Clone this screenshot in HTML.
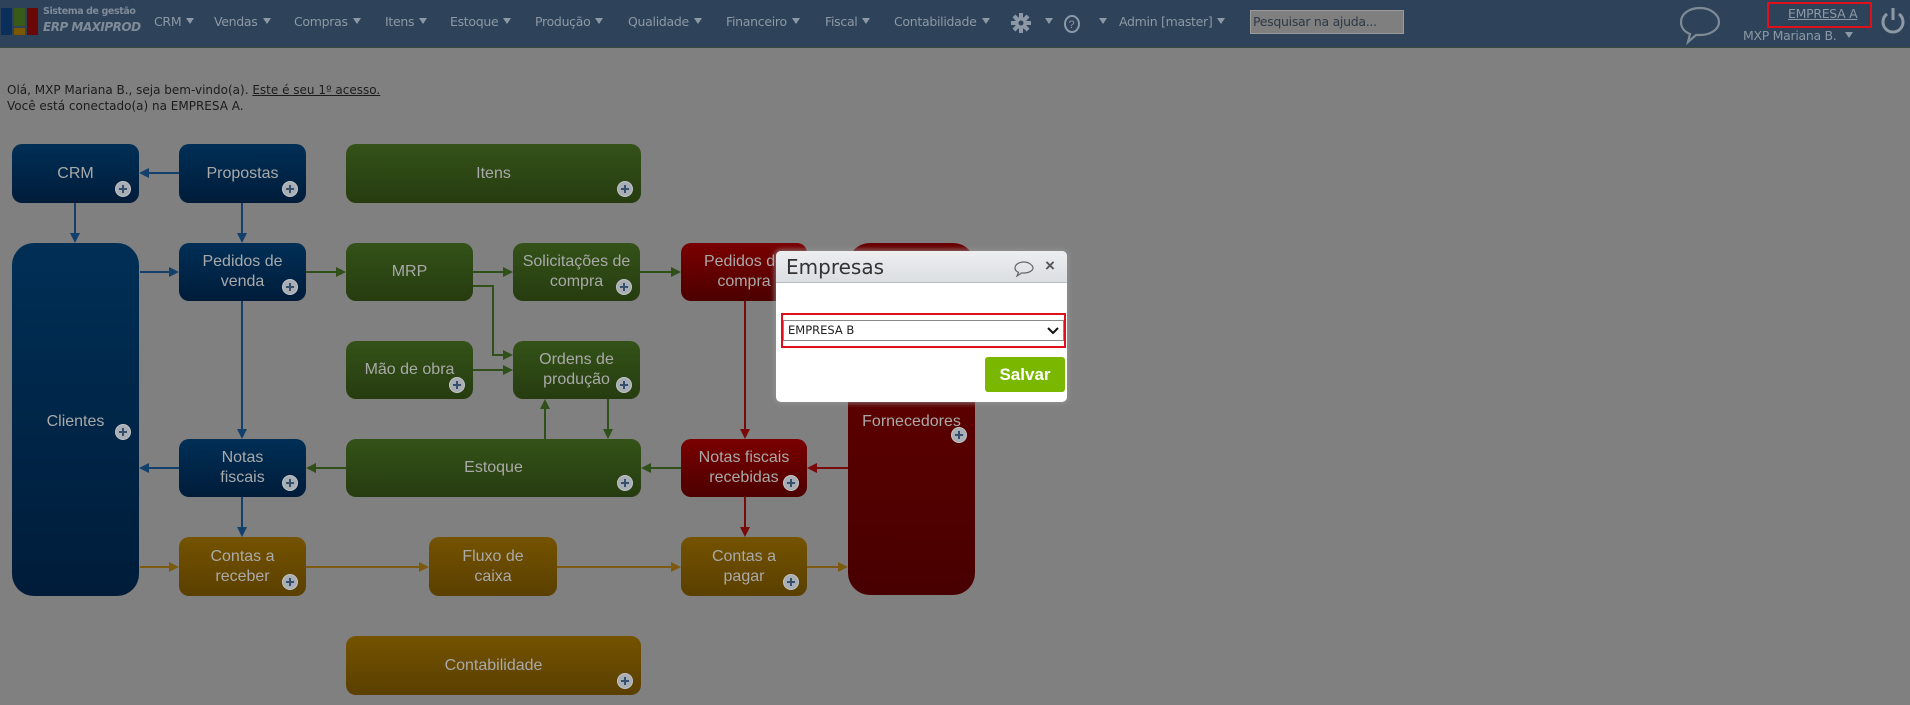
<!DOCTYPE html>
<html><head><meta charset="utf-8"><style>
*{margin:0;padding:0;box-sizing:border-box}
body{width:1910px;height:705px;background:#808080;position:relative;overflow:hidden;font-family:"Liberation Sans",Arial,sans-serif}
#hdr{position:absolute;left:0;top:0;width:1910px;height:48px;background:#2e4359;border-bottom:1px solid #3a4a3a}
.m{position:absolute;top:14px;font-family:"DejaVu Sans",sans-serif;font-size:12.5px;color:#8c98a5;white-space:nowrap;letter-spacing:-0.3px}
.tri{display:inline-block;width:0;height:0;border-left:4px solid transparent;border-right:4px solid transparent;border-top:6px solid #8c98a5;margin-left:5px;vertical-align:2px}
.b{position:absolute;border-radius:10px;color:#a9a9a9;font-size:16px;text-align:center;display:flex;align-items:center;justify-content:center;line-height:20px}
.bl{background:linear-gradient(#002f56,#001c3a)}
.gr{background:linear-gradient(#345218,#263c10)}
.rd{background:linear-gradient(#7a0000,#4c0000)}
.go{background:linear-gradient(#745300,#5a3f00)}
.p{position:absolute;right:8px;bottom:6px;width:16px;height:16px;border-radius:50%;background:#a9aeb4;border:1px solid #c0c4c8}
.p:before{content:"";position:absolute;left:3px;top:6px;width:8px;height:2px;background:#34506e}
.p:after{content:"";position:absolute;left:6px;top:3px;width:2px;height:8px;background:#34506e}
.t{position:absolute;font-family:"DejaVu Sans",sans-serif;font-size:12px;color:#1c1c1c}
</style></head><body>
<div id="hdr">
 <div style="position:absolute;left:1px;top:8px;width:11px;height:27px;background:#0a2f5a"></div>
 <div style="position:absolute;left:14px;top:8px;width:11px;height:18px;background:#3a5a1a"></div>
 <div style="position:absolute;left:14px;top:28px;width:11px;height:7px;background:#7a5800"></div>
 <div style="position:absolute;left:27px;top:8px;width:11px;height:27px;background:#6a0808"></div>
 <div style="position:absolute;left:43px;top:6px;font-family:'DejaVu Sans',sans-serif;font-size:9.5px;font-weight:bold;color:#7f8b98;letter-spacing:-0.4px">Sistema de gestão</div>
 <div style="position:absolute;left:43px;top:20px;font-family:'DejaVu Sans',sans-serif;font-size:12px;font-weight:bold;font-style:italic;color:#7f8b98;letter-spacing:-0.5px">ERP MAXIPROD</div>
 <div class="m" style="left:154px">CRM<span class="tri"></span></div>
 <div class="m" style="left:214px">Vendas<span class="tri"></span></div>
 <div class="m" style="left:294px">Compras<span class="tri"></span></div>
 <div class="m" style="left:385px">Itens<span class="tri"></span></div>
 <div class="m" style="left:450px">Estoque<span class="tri"></span></div>
 <div class="m" style="left:535px">Produção<span class="tri"></span></div>
 <div class="m" style="left:628px">Qualidade<span class="tri"></span></div>
 <div class="m" style="left:726px">Financeiro<span class="tri"></span></div>
 <div class="m" style="left:825px">Fiscal<span class="tri"></span></div>
 <div class="m" style="left:894px">Contabilidade<span class="tri"></span></div>
 <svg style="position:absolute;left:1010px;top:12px" width="22" height="22" viewBox="0 0 22 22"><g fill="#8c98a5"><circle cx="11" cy="11" r="6"/><rect x="9" y="1" width="4" height="20"/><rect x="1" y="9" width="20" height="4"/><rect x="9" y="1" width="4" height="20" transform="rotate(45 11 11)"/><rect x="9" y="1" width="4" height="20" transform="rotate(-45 11 11)"/></g><circle cx="11" cy="11" r="2.5" fill="#2e4359"/></svg>
 <div class="m" style="left:1040px;top:14px"><span class="tri"></span></div>
 <svg style="position:absolute;left:1063px;top:14px" width="18" height="20"><ellipse cx="9" cy="10" rx="7" ry="8" fill="none" stroke="#8c98a5" stroke-width="2"/><text x="5.5" y="14" font-size="11" fill="#8c98a5" font-family="Liberation Sans">?</text></svg>
 <div class="m" style="left:1094px"><span class="tri"></span></div>
 <div class="m" style="left:1119px">Admin [master]<span class="tri"></span></div>
 <div style="position:absolute;left:1250px;top:10px;width:154px;height:24px;background:#7f7f7f;border:1px solid #9a9a9a;font-family:'DejaVu Sans',sans-serif;font-size:12.5px;color:#2e3a45;padding:3px 2px;letter-spacing:-0.3px">Pesquisar na ajuda...</div>
 <svg style="position:absolute;left:1678px;top:5px" width="46" height="40"><path d="M22 3C11 3 3 9 3 17c0 6 4 10 9 12l-2 8 8-7h4c11 0 19-6 19-13S33 3 22 3z" fill="none" stroke="#7e8a96" stroke-width="2.2"/></svg>
 <div style="position:absolute;left:1767px;top:2px;width:105px;height:26px;border:2px solid #e0101a"></div>
 <div style="position:absolute;left:1788px;top:6px;font-family:'DejaVu Sans',sans-serif;font-size:12.5px;color:#8c98a5;text-decoration:underline;letter-spacing:-0.3px">EMPRESA A</div>
 <div style="position:absolute;left:1743px;top:28px;font-family:'DejaVu Sans',sans-serif;font-size:12.5px;color:#8c98a5;letter-spacing:-0.3px">MXP Mariana B.<span class="tri" style="margin-left:9px"></span></div>
 <svg style="position:absolute;left:1879px;top:6px" width="28" height="30"><path d="M8 8A10 10 0 1 0 20 8" fill="none" stroke="#8c98a5" stroke-width="3"/><line x1="14" y1="2" x2="14" y2="14" stroke="#8c98a5" stroke-width="3"/></svg>
</div>

<div class="t" style="left:7px;top:83px">Olá, MXP Mariana B., seja bem-vindo(a). <u>Este é seu 1º acesso.</u></div>
<div class="t" style="left:7px;top:99px">Você está conectado(a) na EMPRESA A.</div>

<svg style="position:absolute;left:0;top:0" width="1910" height="705">
<defs>
<marker id="ab" markerWidth="10" markerHeight="10" refX="8" refY="5" orient="auto" markerUnits="userSpaceOnUse"><path d="M0 0L10 5L0 10z" fill="#123f6b"/></marker>
<marker id="ag" markerWidth="10" markerHeight="10" refX="8" refY="5" orient="auto" markerUnits="userSpaceOnUse"><path d="M0 0L10 5L0 10z" fill="#30501a"/></marker>
<marker id="ar" markerWidth="10" markerHeight="10" refX="8" refY="5" orient="auto" markerUnits="userSpaceOnUse"><path d="M0 0L10 5L0 10z" fill="#7a0a0a"/></marker>
<marker id="ao" markerWidth="10" markerHeight="10" refX="8" refY="5" orient="auto" markerUnits="userSpaceOnUse"><path d="M0 0L10 5L0 10z" fill="#7d5a10"/></marker>
</defs>
<g stroke-width="2" fill="none">
<g stroke="#123f6b" marker-end="url(#ab)">
<path d="M179 173H141"/><path d="M75 203V241"/><path d="M242 203V241"/><path d="M140 272H177"/>
<path d="M242 301V437"/><path d="M179 468H141"/><path d="M242 497V535"/>
</g>
<g stroke="#30501a" marker-end="url(#ag)">
<path d="M306 272H344"/><path d="M473 272H511"/><path d="M640 272H679"/>
<path d="M473 286H493V355H511"/><path d="M473 370H511"/>
<path d="M545 439V401"/><path d="M608 399V437"/>
<path d="M346 468H308"/><path d="M681 468H643"/>
</g>
<g stroke="#7a0a0a" marker-end="url(#ar)">
<path d="M848 468H809"/><path d="M745 301V437"/><path d="M745 497V535"/>
</g>
<g stroke="#7d5a10" marker-end="url(#ao)">
<path d="M140 567H177"/><path d="M306 567H427"/><path d="M557 567H679"/><path d="M807 567H846"/>
</g>
</g>
</svg>

<div class="b bl" style="left:12px;top:144px;width:127px;height:59px">CRM<i class="p"></i></div>
<div class="b bl" style="left:179px;top:144px;width:127px;height:59px">Propostas<i class="p"></i></div>
<div class="b gr" style="left:346px;top:144px;width:295px;height:59px">Itens<i class="p"></i></div>
<div class="b bl" style="left:12px;top:243px;width:127px;height:353px;border-radius:22px;padding-top:5px">Clientes<i class="p" style="bottom:auto;top:181px"></i></div>
<div class="b bl" style="left:179px;top:243px;width:127px;height:58px">Pedidos de<br>venda<i class="p"></i></div>
<div class="b gr" style="left:346px;top:243px;width:127px;height:58px">MRP</div>
<div class="b gr" style="left:513px;top:243px;width:127px;height:58px">Solicitações de<br>compra<i class="p"></i></div>
<div class="b rd" style="left:681px;top:243px;width:126px;height:58px">Pedidos de<br>compra</div>
<div class="b rd" style="left:848px;top:243px;width:127px;height:352px;border-radius:22px;background:linear-gradient(#6a0000,#480000);padding-top:5px">Fornecedores<i class="p" style="bottom:auto;top:184px"></i></div>
<div class="b gr" style="left:346px;top:341px;width:127px;height:58px">Mão de obra<i class="p"></i></div>
<div class="b gr" style="left:513px;top:341px;width:127px;height:58px">Ordens de<br>produção<i class="p"></i></div>
<div class="b bl" style="left:179px;top:439px;width:127px;height:58px">Notas<br>fiscais<i class="p"></i></div>
<div class="b gr" style="left:346px;top:439px;width:295px;height:58px">Estoque<i class="p"></i></div>
<div class="b rd" style="left:681px;top:439px;width:126px;height:58px">Notas fiscais<br>recebidas<i class="p"></i></div>
<div class="b go" style="left:179px;top:537px;width:127px;height:59px">Contas a<br>receber<i class="p"></i></div>
<div class="b go" style="left:429px;top:537px;width:128px;height:59px">Fluxo de<br>caixa</div>
<div class="b go" style="left:681px;top:537px;width:126px;height:59px">Contas a<br>pagar<i class="p"></i></div>
<div class="b go" style="left:346px;top:636px;width:295px;height:59px">Contabilidade<i class="p"></i></div>

<div style="position:absolute;left:776px;top:251px;width:291px;height:151px;background:#fff;border-radius:5px;box-shadow:0 0 4px 2px rgba(150,150,150,.6);overflow:hidden">
 <div style="height:32px;background:linear-gradient(#eceef0,#dcdfe2);border-bottom:1px solid #b8bcc0;position:relative">
  <div style="position:absolute;left:10px;top:4px;font-family:'DejaVu Sans',sans-serif;font-size:20px;color:#333">Empresas</div>
  <svg style="position:absolute;left:237px;top:9px" width="22" height="18"><path d="M11 2C6 2 2 4.5 2 8c0 2 1.5 3.5 3.5 4.3L4 16l4.5-3h2.5c5 0 9-2.5 9-5S16 2 11 2z" fill="none" stroke="#666" stroke-width="1.2"/></svg>
  <div style="position:absolute;left:269px;top:5px;font-size:17px;font-weight:bold;color:#555">×</div>
 </div>
 <div style="position:absolute;left:5px;top:62px;width:285px;height:35px;border:2px solid #e0101a"></div>
 <div style="position:absolute;left:7px;top:69px;width:281px;height:21px;border:1px solid #8a8a8a;background:#fff;font-family:'DejaVu Sans',sans-serif;font-size:11.5px;color:#222;padding:2px 4px">EMPRESA B
  <svg style="position:absolute;right:4px;top:6px" width="12" height="8"><path d="M1 1L6 6L11 1" fill="none" stroke="#111" stroke-width="2"/></svg></div>
 <div style="position:absolute;left:209px;top:106px;width:80px;height:35px;background:#79b700;border-radius:3px;color:#fff;font-weight:bold;font-size:17px;text-align:center;line-height:35px">Salvar</div>
</div>
</body></html>
